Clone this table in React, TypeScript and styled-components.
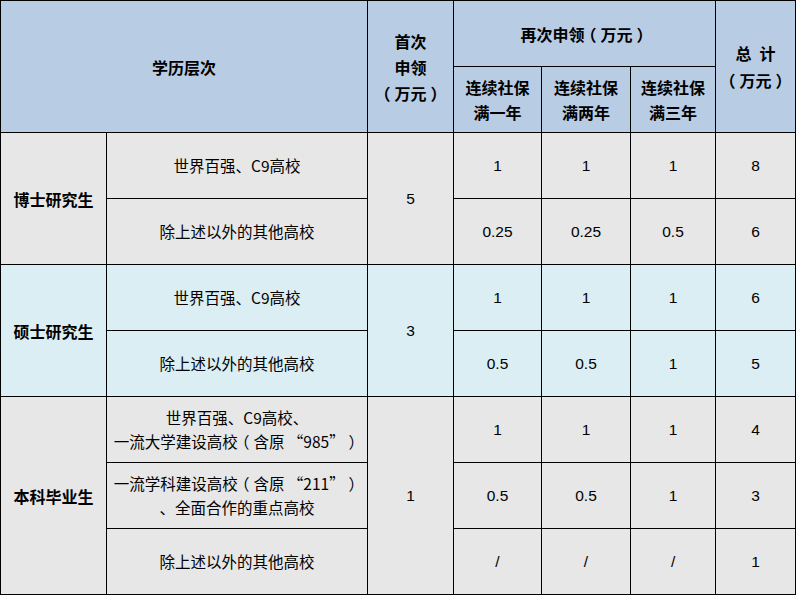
import React from "react";
import styled, { createGlobalStyle } from "styled-components";

const Global = createGlobalStyle`
  html, body { margin: 0; padding: 0; background: #ffffff; }
  body {
    font-family: "Noto Sans CJK SC", "Noto Sans", sans-serif;
    color: #000;
  }
`;

const Table = styled.table`
  border-collapse: collapse;
  table-layout: fixed;
  width: 795px;
  font-family: "Liberation Sans", "Noto Sans CJK SC", sans-serif;
`;

type Tone = "head" | "gray" | "blue";
const bg: Record<Tone, string> = {
  head: "#b8cce4",
  gray: "#e7e7e7",
  blue: "#daeef3",
};

const Cell = styled.td<{ $tone: Tone; $bold?: boolean; $lh?: number }>`
  border: 1px solid #000;
  background: ${(p) => bg[p.$tone]};
  text-align: center;
  vertical-align: middle;
  padding: 0;
  font-size: 16px;
  font-weight: ${(p) => (p.$bold ? 700 : 400)};
  line-height: ${(p) => p.$lh ?? 22}px;
  font-family: ${(p) =>
    p.$bold ? `"Noto Sans CJK SC", sans-serif` : `"Liberation Sans", "Noto Sans CJK SC", sans-serif`};
  color: #000;
`;

/* full-width bracket, glyph centred in its em box like the original font */
const Punct = styled.span`
  display: inline-block;
  width: 1em;
  text-align: center;
  font-family: "Noto Sans CJK SC", sans-serif;
  font-feature-settings: "halt" 1;
`;

const Num = styled.span`
  font-family: "Liberation Sans", sans-serif;
  font-size: 15.5px;
`;

const Row = styled.tr<{ $h?: number }>`
  height: ${(p) => p.$h ?? 66}px;
`;

const Cjk = styled.span`
  font-family: "Noto Sans CJK SC", sans-serif;
  font-size: 15.5px;
`;

const Open = () => <Punct>（</Punct>;
const Close = () => <Punct>）</Punct>;
const Wan = () => (
  <>
    <Open />
    万元
    <Close />
  </>
);

type Sub = { label: React.ReactNode; vals: string[] };
type Group = { name: string; first: string; tone: Tone; subs: Sub[] };

const other = "除上述以外的其他高校";

const groups: Group[] = [
  {
    name: "博士研究生",
    first: "5",
    tone: "gray",
    subs: [
      { label: "世界百强、C9高校", vals: ["1", "1", "1", "8"] },
      { label: other, vals: ["0.25", "0.25", "0.5", "6"] },
    ],
  },
  {
    name: "硕士研究生",
    first: "3",
    tone: "blue",
    subs: [
      { label: "世界百强、C9高校", vals: ["1", "1", "1", "6"] },
      { label: other, vals: ["0.5", "0.5", "1", "5"] },
    ],
  },
  {
    name: "本科毕业生",
    first: "1",
    tone: "gray",
    subs: [
      {
        label: (
          <>
            世界百强、C9高校、
            <br />
            一流大学建设高校
            <Open />
            含原 “985”
            <Close />
          </>
        ),
        vals: ["1", "1", "1", "4"],
      },
      {
        label: (
          <>
            一流学科建设高校
            <Open />
            含原 “211”
            <Close />
            <br />
            、全面合作的重点高校
          </>
        ),
        vals: ["0.5", "0.5", "1", "3"],
      },
      { label: other, vals: ["/", "/", "/", "1"] },
    ],
  },
];

export default function App() {
  return (
    <>
      <Global />
      <Table>
        <colgroup>
          <col style={{ width: 106 }} />
          <col style={{ width: 261 }} />
          <col style={{ width: 86 }} />
          <col style={{ width: 88 }} />
          <col style={{ width: 89 }} />
          <col style={{ width: 85 }} />
          <col style={{ width: 80 }} />
        </colgroup>
        <tbody>
          <Row>
            <Cell $tone="head" $bold colSpan={2} rowSpan={2}>
              学历层次
            </Cell>
            <Cell $tone="head" $bold rowSpan={2} $lh={26}>
              首次
              <br />
              申领
              <br />
              <Wan />
            </Cell>
            <Cell $tone="head" $bold colSpan={3}>
              再次申领
              <Wan />
            </Cell>
            <Cell $tone="head" $bold rowSpan={2} $lh={27}>
              总{"\u2002"}计
              <br />
              <Wan />
            </Cell>
          </Row>
          <Row>
            <Cell $tone="head" $bold $lh={25}>
              连续社保
              <br />
              满一年
            </Cell>
            <Cell $tone="head" $bold $lh={25}>
              连续社保
              <br />
              满两年
            </Cell>
            <Cell $tone="head" $bold $lh={25}>
              连续社保
              <br />
              满三年
            </Cell>
          </Row>
          {groups.map((g) =>
            g.subs.map((s, i) => (
              <Row key={g.name + i}>
                {i === 0 && (
                  <Cell $tone={g.tone} $bold rowSpan={g.subs.length}>
                    {g.name}
                  </Cell>
                )}
                <Cell $tone={g.tone}>
                  <Cjk>{s.label}</Cjk>
                </Cell>
                {i === 0 && (
                  <Cell $tone={g.tone} rowSpan={g.subs.length}>
                    <Num>{g.first}</Num>
                  </Cell>
                )}
                {s.vals.map((v, j) => (
                  <Cell $tone={g.tone} key={j}>
                    <Num>{v}</Num>
                  </Cell>
                ))}
              </Row>
            ))
          )}
        </tbody>
      </Table>
    </>
  );
}
